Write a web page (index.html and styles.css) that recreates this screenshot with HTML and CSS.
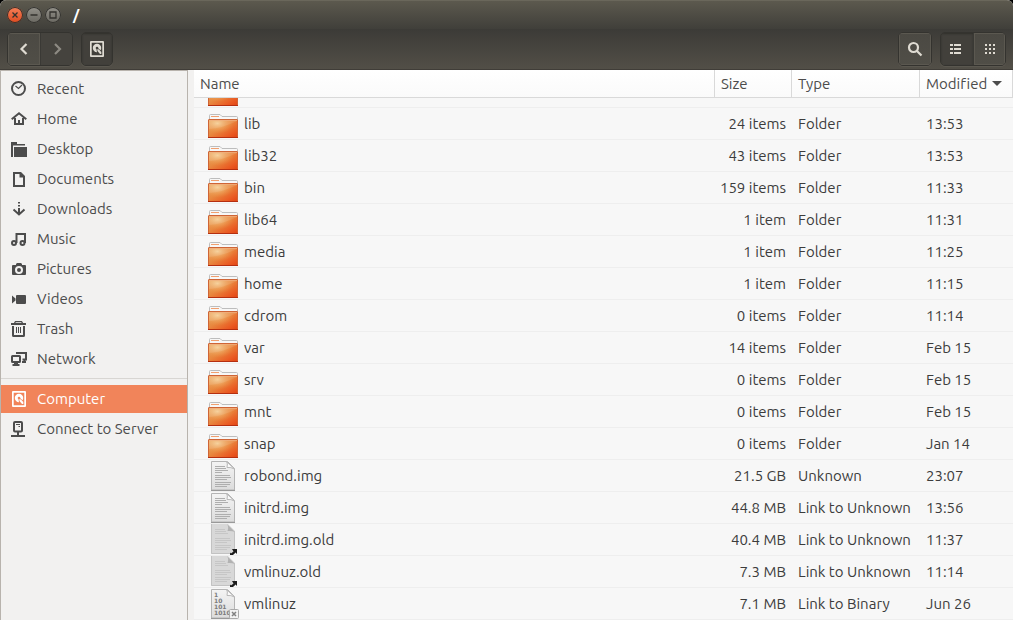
FILE: index.html
```html
<!DOCTYPE html>
<html lang="en">
<head>
<meta charset="utf-8">
<title>/</title>
<link rel="stylesheet" href="styles.css">
</head>
<body>
<svg class="defs" aria-hidden="true">
  <defs>
    <linearGradient id="folder-fill" x1="0" y1="0" x2="1" y2="1">
      <stop offset="0" stop-color="#e9a55f"/><stop offset=".45" stop-color="#e8883f"/><stop offset=".8" stop-color="#ea5a22"/><stop offset="1" stop-color="#e24414"/>
    </linearGradient>
    <radialGradient id="folder-glow" cx=".3" cy=".2" r=".6">
      <stop offset="0" stop-color="#f8dca6" stop-opacity=".8"/><stop offset="1" stop-color="#f0a050" stop-opacity="0"/>
    </radialGradient>
    <linearGradient id="paper-fill" x1="0" y1="0" x2="0" y2="1">
      <stop offset="0" stop-color="#f4f4f4"/><stop offset="1" stop-color="#dcdcdc"/>
    </linearGradient>
    <symbol id="folder" viewBox="0 0 32 31">
      <path d="M2.500 12V7.500q0-1 1-1h9.500l2 2h14.500q1 0 1 1V12" fill="#f7f7f7" stroke="#bdbdbd"/>
      <path d="M4 8.500h8" stroke="#f0a070"/>
      <rect x="1.500" y="11.500" width="29" height="18" rx=".5" fill="url(#folder-fill)" stroke="#cf6536"/>
      <rect x="2" y="12" width="28" height="17" fill="url(#folder-glow)"/>
      <path d="M2 21Q16 20 30 13v-1H2z" fill="#fff" opacity=".1"/>
      <path d="M2 12.500h28" stroke="#f0b080" opacity=".7"/>
      <path d="M1 29.500h30" stroke="#b52f10"/>
    </symbol>
    <symbol id="paper" viewBox="0 0 32 31">
      <path d="M4.500 1.500h16l7 7v21.500h-23z" fill="url(#paper-fill)" stroke="#b4b4b4"/>
      <path d="M19.500 1.500q1.500 2 .5 6 4-.500 7.500 1.500z" fill="#fafafa" stroke="#b8b8b8"/>
      <path d="M4 30.500h24" stroke="#999"/>
    </symbol>
    <symbol id="text-file" viewBox="0 0 32 31">
      <use href="#paper"/>
      <path d="M8 6.500h10M8 8.500h11M8 10.500h13M8 12.500h7M8 15.500h15M8 17.500h16M8 19.500h12M8 22.500h16M8 24.500h15M8 26.500h12" stroke="#aeaeae"/>
    </symbol>
    <symbol id="link-file" viewBox="0 0 32 31">
      <path d="M4 0h17l7 7v23H4z" fill="#d8d8d8"/>
      <path d="M20 0q2 3 .5 7 4-.500 7.500 1z" fill="#b2b2b2"/>
      <path d="M8 5.500h10M8 7.500h11M8 9.500h13M8 14.500h15M8 16.500h16M8 18.500h12M8 21.500h16M8 23.500h15M8 25.500h12" stroke="#c6c6c6"/>
      <path d="M4.500 0v29.500h23V7" fill="none" stroke="#c2c2c2"/>
      <path d="M25 25h5v5l-1.500-1.500-2.500 2.500H23v-1.500l1-1v1l2.500-2z" fill="#1c1c1c"/>
    </symbol>
    <symbol id="binary-file" viewBox="0 0 32 31">
      <use href="#paper"/>
      <g class="bits"><text x="7" y="9">1</text><text x="7" y="15">10</text><text x="7" y="21">101</text><text x="7" y="27">1010</text></g>
      <rect x="22.500" y="21.500" width="9" height="9" rx="1" fill="#f2f2f2" stroke="#aaa"/>
      <path d="M25 24l4 4M29 24l-4 4" stroke="#808080" stroke-width="1.500"/>
    </symbol>
    <symbol id="drive" viewBox="0 0 16 16">
      <path fill-rule="evenodd" d="M2 0h12q1 0 1 1v14q0 1-1 1H2q-1 0-1-1V1q0-1 1-1zM2.700 1.700v12.600h10.600V1.700z" fill="currentColor"/>
      <path fill-rule="evenodd" d="M8 2.800a4.200 4.200 0 0 1 4.200 4.200q0 1.300-.7 2.300L9.300 7.200A1.300 1.300 0 1 0 7.500 8.200l.5 3A4.200 4.200 0 1 1 8 2.800z" fill="currentColor"/>
      <path d="M8.300 8l1.700.5 2.300 2.500v2h-1.300L8.500 10z" fill="currentColor"/>
    </symbol>
  </defs>
</svg>

<div class="window">
  <header class="titlebar">
    <button class="win-btn close" aria-label="Close"><svg viewBox="0 0 16 16"><path d="M5.500 5.500l5 5M10.500 5.500l-5 5"/></svg></button>
    <button class="win-btn" aria-label="Minimize"><svg viewBox="0 0 16 16"><path d="M4.500 8h7"/></svg></button>
    <button class="win-btn" aria-label="Maximize"><svg viewBox="0 0 16 16"><path d="M5 5h6v6H5z"/></svg></button>
    <h1 class="title">/</h1>
  </header>

  <nav class="toolbar">
    <div class="group">
      <button class="tool" aria-label="Back"><svg class="icon" viewBox="0 0 16 16"><path d="M10.500 3L5.500 8l5 5" class="arrow"/></svg></button>
      <button class="tool disabled" disabled aria-label="Forward"><svg class="icon" viewBox="0 0 16 16"><path d="M6 3l5 5-5 5" class="arrow"/></svg></button>
    </div>
    <div class="group location"><button class="tool pressed" aria-label="Computer"><svg class="icon"><use href="#drive"/></svg></button></div>
    <div class="group search"><button class="tool" aria-label="Search"><svg class="icon" viewBox="0 0 16 16"><circle cx="6.500" cy="6.500" r="4.500" class="arrow"/><path d="M10 10l4.500 4.500" class="arrow"/></svg></button></div>
    <div class="group">
      <button class="tool pressed" aria-label="List view"><svg class="icon" viewBox="0 0 16 16"><path d="M1 3h3v2H1zM5 3h7v2H5zM1 7h3v2H1zM5 7h7v2H5zM1 11h3v2H1zM5 11h7v2H5z" fill="currentColor"/></svg></button>
      <button class="tool" aria-label="Icon view"><svg class="icon" viewBox="0 0 16 16"><path d="M3 3h2v2H3zM7 3h2v2H7zM11 3h2v2h-2zM3 7h2v2H3zM7 7h2v2H7zM11 7h2v2h-2zM3 11h2v2H3zM7 11h2v2H7zM11 11h2v2h-2z" fill="currentColor"/></svg></button>
    </div>
  </nav>

  <div class="content">
    <aside class="sidebar">
      <a class="place" href="#"><svg class="icon line" viewBox="0 0 16 16"><circle cx="7.500" cy="7.500" r="6.500"/><path d="M4.500 5l3 2.500 3.500-3.500" stroke-width="1.200"/></svg>Recent</a>
      <a class="place" href="#"><svg class="icon line" viewBox="0 0 16 16"><path d="M.7 8.300L8 2.300l7.300 6"/><path d="M4 7v6h8V7"/><path d="M7 9h2v4H7z" fill="currentColor" stroke="none"/></svg>Home</a>
      <a class="place" href="#"><svg class="icon" viewBox="0 0 16 16"><path d="M0 1h6v2h8v1.500H2V16H0zM3 6h13v10H3z" fill="currentColor"/></svg>Desktop</a>
      <a class="place" href="#"><svg class="icon" viewBox="0 0 16 16"><path fill-rule="evenodd" d="M2 1h8l4 4v11H2zM4 3v11h8V6.500H8.500V3z" fill="currentColor"/></svg>Documents</a>
      <a class="place" href="#"><svg class="icon line" viewBox="0 0 16 16"><path d="M8 1v1.500M8 4v1.500M8 7v6M2.500 8.500L8 13.500l5.500-5"/></svg>Downloads</a>
      <a class="place" href="#"><svg class="icon line" viewBox="0 0 16 16"><circle cx="3" cy="12" r="2"/><circle cx="11.500" cy="12" r="2"/><path d="M5.500 12V3H14v9"/></svg>Music</a>
      <a class="place" href="#"><svg class="icon" viewBox="0 0 16 16"><path fill-rule="evenodd" d="M5 3l1-1h4l1 1v1h3q1 0 1 1v8q0 1-1 1H2q-1 0-1-1V5q0-1 1-1h3zM8 5a4 4 0 1 0 0 8 4 4 0 0 0 0-8zm0 2a2 2 0 1 1 0 4 2 2 0 0 1 0-4z" fill="currentColor"/></svg>Pictures</a>
      <a class="place" href="#"><svg class="icon" viewBox="0 0 16 16"><path d="M6 4h8q1 0 1 1v7q0 1-1 1H6q-1 0-1-1V5q0-1 1-1zM1 4.500l3.500 3v2L1 12.500z" fill="currentColor"/></svg>Videos</a>
      <a class="place" href="#"><svg class="icon line" viewBox="0 0 16 16"><path d="M0 3h15M2 5v9.500q0 .5.500.500h10q.5 0 .5-.500V5"/><path d="M3.500 2l1-1.300h6l1 1.300" stroke-width="1.300"/><path d="M5.500 6v6M7.500 6v6M9.500 6v6" stroke-width="1"/></svg>Trash</a>
      <a class="place" href="#"><svg class="icon line" viewBox="0 0 16 16"><rect x="1" y="5" width="8" height="6" rx=".5"/><path d="M3 11h4v2h1.500v2h-7v-2H3z" fill="currentColor" stroke="none"/><path d="M6 3V2h9v6.500h-3.500M13.500 9v2"/><path d="M11 10h4v2h-4z" fill="currentColor" stroke="none"/></svg>Network</a>
      <hr class="separator">
      <a class="place selected" href="#"><svg class="icon"><use href="#drive"/></svg>Computer</a>
      <a class="place" href="#"><svg class="icon line" viewBox="0 0 16 16"><rect x="3" y="1" width="8" height="9.500" rx="1"/><path d="M7 11v3M0 15h14"/><path d="M5 3.500h4M7.500 5.500h1.500" stroke-width="1"/></svg>Connect to Server</a>
    </aside>

    <main class="files">
      <table class="list">
        <thead>
          <tr><th>Name</th><th>Size</th><th>Type</th><th>Modified<svg class="sort" viewBox="0 0 10 5"><path d="M0 0h10L5 5z"/></svg></th></tr>
        </thead>
        <tbody>
          <tr><td><svg class="file"><use href="#folder"/></svg></td><td></td><td></td><td></td></tr>
          <tr><td><svg class="file"><use href="#folder"/></svg>lib</td><td>24 items</td><td>Folder</td><td>13:53</td></tr>
          <tr><td><svg class="file"><use href="#folder"/></svg>lib32</td><td>43 items</td><td>Folder</td><td>13:53</td></tr>
          <tr><td><svg class="file"><use href="#folder"/></svg>bin</td><td>159 items</td><td>Folder</td><td>11:33</td></tr>
          <tr><td><svg class="file"><use href="#folder"/></svg>lib64</td><td>1 item</td><td>Folder</td><td>11:31</td></tr>
          <tr><td><svg class="file"><use href="#folder"/></svg>media</td><td>1 item</td><td>Folder</td><td>11:25</td></tr>
          <tr><td><svg class="file"><use href="#folder"/></svg>home</td><td>1 item</td><td>Folder</td><td>11:15</td></tr>
          <tr><td><svg class="file"><use href="#folder"/></svg>cdrom</td><td>0 items</td><td>Folder</td><td>11:14</td></tr>
          <tr><td><svg class="file"><use href="#folder"/></svg>var</td><td>14 items</td><td>Folder</td><td>Feb 15</td></tr>
          <tr><td><svg class="file"><use href="#folder"/></svg>srv</td><td>0 items</td><td>Folder</td><td>Feb 15</td></tr>
          <tr><td><svg class="file"><use href="#folder"/></svg>mnt</td><td>0 items</td><td>Folder</td><td>Feb 15</td></tr>
          <tr><td><svg class="file"><use href="#folder"/></svg>snap</td><td>0 items</td><td>Folder</td><td>Jan 14</td></tr>
          <tr><td><svg class="file"><use href="#text-file"/></svg>robond.img</td><td>21.5 GB</td><td>Unknown</td><td>23:07</td></tr>
          <tr><td><svg class="file"><use href="#text-file"/></svg>initrd.img</td><td>44.8 MB</td><td>Link to Unknown</td><td>13:56</td></tr>
          <tr><td><svg class="file"><use href="#link-file"/></svg>initrd.img.old</td><td>40.4 MB</td><td>Link to Unknown</td><td>11:37</td></tr>
          <tr><td><svg class="file"><use href="#link-file"/></svg>vmlinuz.old</td><td>7.3 MB</td><td>Link to Unknown</td><td>11:14</td></tr>
          <tr><td><svg class="file"><use href="#binary-file"/></svg>vmlinuz</td><td>7.1 MB</td><td>Link to Binary</td><td>Jun 26</td></tr>
        </tbody>
      </table>
    </main>
  </div>
</div>
</body>
</html>
```
FILE: styles.css
```css
* { box-sizing: border-box; }

body {
  margin: 0;
  background: #000;
  color: #3c3c3c;
  font: 15px/20px Ubuntu, "Noto Sans", "Open Sans", sans-serif;
  font-variant-ligatures: none;
}

.defs { position: absolute; width: 0; height: 0; }

.window {
  display: flex;
  flex-direction: column;
  height: 100vh;
  border-radius: 6px 6px 0 0;
  overflow: hidden;
  background: #f2f1f0;
}

.titlebar {
  display: flex;
  align-items: center;
  gap: 3px;
  height: 29px;
  padding: 0 7px;
  background: linear-gradient(#5c594e, #403f3a);
  border-top: 1px solid #6a675b;
  flex: none;
}

.win-btn {
  width: 16px;
  height: 16px;
  padding: 0;
  border: 0;
  border-radius: 50%;
  background: linear-gradient(#93918a, #6a6861);
  box-shadow: inset 0 0 0 1px #33322e;
}

.win-btn.close { background: linear-gradient(#f58059, #de4a1f); }
.win-btn svg { display: block; fill: none; stroke: #33322e; stroke-width: 1.3; }

.title {
  margin: 0 0 0 9px;
  color: #fff;
  font-size: 15px;
  line-height: 20px;
}

.toolbar {
  display: flex;
  gap: 8px;
  height: 41px;
  padding: 3px 7px 0;
  background: linear-gradient(#3c3b37, #524f47);
  border-bottom: 1px solid #403d38;
  flex: none;
}

.group {
  display: flex;
  height: 34px;
  border: 1px solid #34332f;
  border-radius: 5px;
  overflow: hidden;
  box-shadow: 0 1px 0 #5a574f;
}

.group.search { margin-left: auto; }

.tool {
  display: flex;
  align-items: center;
  justify-content: center;
  width: 32px;
  padding: 0;
  border: 0;
  background: linear-gradient(#4b4943, #504e47);
  box-shadow: inset 0 0 0 1px #5b5850;
  color: #dfdbd2;
}

.location .tool { width: 30px; }
.tool + .tool { border-left: 1px solid #3a3935; }
.tool.pressed { background: #42403b; box-shadow: inset 0 1px 2px #302f2b; }
.tool.disabled { background: #45433e; box-shadow: none; color: #8d8a83; }

.icon { width: 16px; height: 16px; flex: none; }
.arrow { fill: none; stroke: currentColor; stroke-width: 2.2; }
.line { fill: none; stroke: currentColor; stroke-width: 2; }
.bits { fill: #7c7c7c; font: bold 6px "DejaVu Sans", sans-serif; }

.content { display: flex; flex: 1; min-height: 0; }

.sidebar {
  display: flex;
  flex-direction: column;
  gap: 2px;
  width: 188px;
  padding-top: 4px;
  border: solid #b8b3ad;
  border-width: 1px 1px 0;
  flex: none;
}

.place {
  display: flex;
  align-items: center;
  gap: 10px;
  height: 28px;
  padding-left: 10px;
  color: #4c4c4c;
  text-decoration: none;
}

.place.selected { background: #f1845a; color: #fff; }

.separator {
  width: 100%;
  margin: 3px 0 4px;
  border: 0;
  border-top: 1px solid #d8d6d3;
}

.files { flex: 1; min-width: 0; margin-left: 6px; background: #f7f7f7; }

.list { display: flex; flex-direction: column; height: 100%; }

.list tr { display: grid; grid-template-columns: 1fr 77px 128px 93px; }

.list thead { display: block; background: linear-gradient(#fff, #fafafa); flex: none; }

.list th {
  display: flex;
  align-items: center;
  gap: 5px;
  height: 28px;
  padding: 0 6px;
  border: solid #d9d9d9;
  border-width: 0 1px 1px 0;
  color: #4c4c4c;
  font-weight: 400;
}

.sort { width: 10px; height: 5px; fill: #4c4c4c; flex: none; }

.list tbody {
  display: flex;
  flex-direction: column;
  justify-content: flex-end;
  flex: 1;
  min-height: 0;
  overflow: hidden;
}

.list tbody tr { flex: none; border-bottom: 1px solid #eee; }

.list td {
  display: flex;
  align-items: center;
  height: 31px;
  padding: 0 6px;
  white-space: nowrap;
}

.list td:first-child { gap: 5px; padding-left: 13px; }
.list td:nth-child(2) { justify-content: flex-end; }

.file { width: 32px; height: 31px; flex: none; }
```
